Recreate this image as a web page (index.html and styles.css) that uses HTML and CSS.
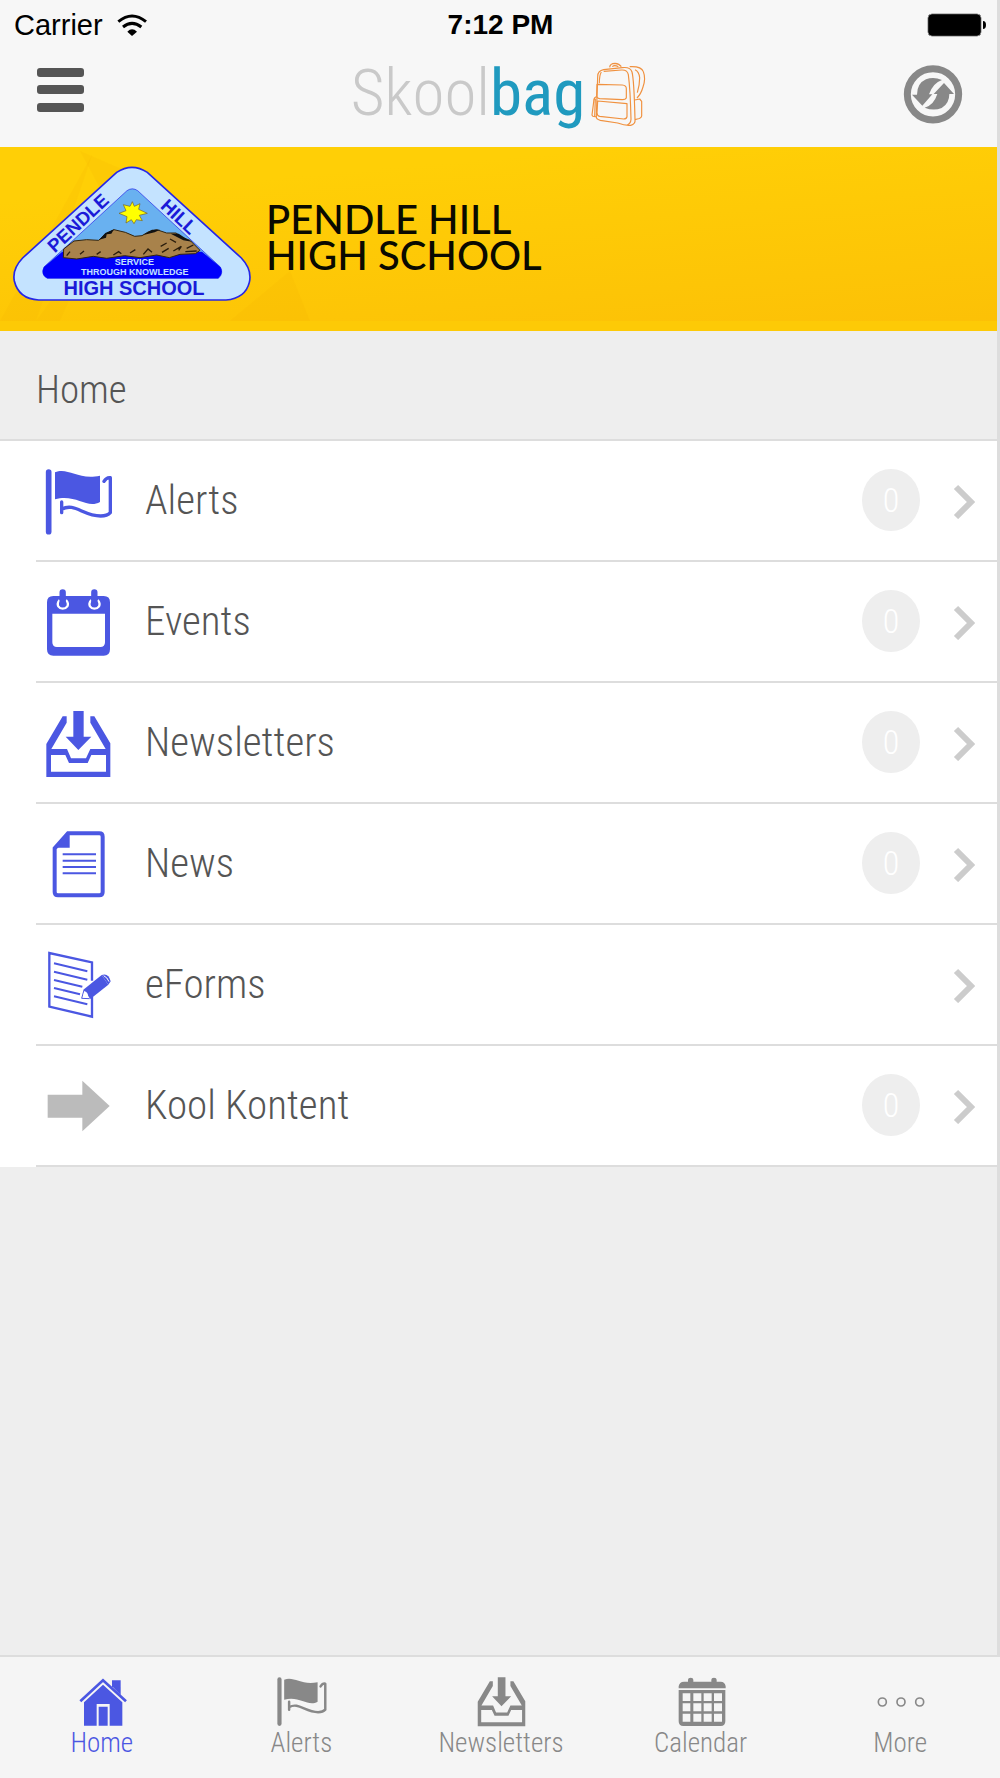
FILE: index.html
```html
<!DOCTYPE html>
<html lang="en">
<head>
<meta charset="utf-8">
<meta name="viewport" content="width=device-width, initial-scale=1">
<title>Pendle Hill High School</title>
<link rel="stylesheet" href="styles.css">
</head>
<body>
<svg class="sprite" aria-hidden="true">
  <symbol id="flag" viewBox="132 380 210 210">
    <path d="M146 398V577" fill="none" stroke="currentColor" stroke-width="17" stroke-linecap="round"/>
    <path d="M165 399C205 383 232 423 300 409V488C260 510 228 463 165 480Z" fill="currentColor"/>
    <path d="M185 488V520M185 510C222 488 250 530 302 530Q322 530 331 520V415Q320 413 312 426" fill="none" stroke="currentColor" stroke-width="10" stroke-linecap="round" stroke-linejoin="round"/>
  </symbol>
  <symbol id="events" viewBox="132 742 210 210">
    <path fill-rule="evenodd" fill="currentColor" d="M160 769H311Q330 769 330 788V929Q330 948 311 948H160Q141 948 141 929V788Q141 769 160 769ZM157 822V908Q157 922 171 922H301Q315 922 315 908V822Z"/>
    <path d="M179 781Q170 791 175 800Q180 807 188 807Q197 807 202 800Q207 791 198 781M274 781Q265 791 270 800Q275 807 283 807Q292 807 297 800Q302 791 293 781" fill="none" stroke="#fff" stroke-width="7"/>
    <path d="M188 758V792M283 758V792" fill="none" stroke="currentColor" stroke-width="19" stroke-linecap="round"/>
  </symbol>
  <symbol id="inbox" viewBox="132 84 210 210">
    <path fill="currentColor" d="M220 93H251V170H274L235 210L197 170H220Z"/>
    <path fill-rule="evenodd" fill="currentColor" d="M188 109H200V128L154 207H201L213 235H258L271 207H317L271 128V109H283L331 190V291H139V192ZM153 225V275H318V225H274L263 249H207L196 225Z"/>
  </symbol>
  <symbol id="news" viewBox="132 448 210 210">
    <path d="M204 461H298Q308 461 308 471V637Q308 647 298 647H174Q164 647 164 637V506Z" fill="none" stroke="currentColor" stroke-width="12"/>
    <path d="M209 459V504H161Z" fill="currentColor"/>
    <path d="M188 524H288M188 543H288M188 562H288M188 581H288" stroke="currentColor" stroke-width="6"/>
  </symbol>
  <symbol id="eforms" viewBox="132 92 210 210">
    <path d="M276 184V129L148 101V262L276 292V232" fill="none" stroke="currentColor" stroke-width="7"/>
    <path d="M162 132L262 156M162 157L262 181M162 182L247 202M162 206L240 225M162 231L262 255" stroke="currentColor" stroke-width="6"/>
    <path d="M250 211L305 167L325 196L271 239Z" fill="currentColor"/>
    <path d="M305 167Q326 160 332 186L325 196Z" fill="currentColor"/>
    <path d="M252 212L245 237L269 238" fill="none" stroke="currentColor" stroke-width="3"/>
    <path d="M253 216Q264 218 265 233L249 234Z" fill="#fff"/>
    <path d="M311 169Q322 174 327 187" fill="none" stroke="#fff" stroke-width="3"/>
  </symbol>
  <symbol id="arrow" viewBox="132 454 210 210">
    <path d="M143 525H247V483L329 559L247 635V594H143Z" fill="currentColor"/>
  </symbol>
  <symbol id="chevron" viewBox="0 0 22 36">
    <path d="M3 4L18 19L3 34" fill="none" stroke="currentColor" stroke-width="6"/>
  </symbol>
  <symbol id="house" viewBox="226 108 156 156">
    <path d="M236 187L304 124L373 187" fill="none" stroke="currentColor" stroke-width="8"/>
    <path d="M331 142V124H357V168Z" fill="currentColor"/>
    <path fill-rule="evenodd" fill="currentColor" d="M304 137L362 190V260H324V195H285V260H247V190ZM291 203H318V260H291Z"/>
  </symbol>
  <symbol id="calendar" viewBox="830 108 156 156">
    <path d="M838 148V142Q840 128 854 128H866V122Q866 116 874 116Q882 116 882 122V128H936V122Q936 116 944 116Q952 116 952 122V128H964Q977 128 979 142V148Z" fill="currentColor"/>
    <path fill-rule="evenodd" fill="currentColor" d="M838 153H978V247Q978 261 964 261H852Q838 261 838 247ZM850 163V186H873V163ZM882 163V186H906V163ZM913 163V186H937V163ZM944 163V186H968V163ZM850 193V217H873V193ZM882 193V217H906V193ZM913 193V217H937V193ZM944 193V217H968V193ZM850 224V248H873V224ZM882 224V248H906V224ZM913 224V248H937V224ZM944 224V248H968V224Z"/>
  </symbol>
  <symbol id="more" viewBox="405 108 156 156">
    <g fill="none" stroke="currentColor" stroke-width="5"><circle cx="427" cy="189" r="12"/><circle cx="483" cy="189" r="12"/><circle cx="539" cy="189" r="12"/></g>
  </symbol>
</svg>

<div class="screen">
  <header class="header">
    <div class="status">
      <span class="carrier">Carrier
        <svg width="30" height="22" viewBox="355 37 90 66" aria-hidden="true">
          <g fill="none" stroke="#000" stroke-width="9"><path d="M359 60Q400 26 442 60"/><path d="M373 76Q400 54 428 76"/></g>
          <path d="M386 90Q400 76 415 90L400 103Z"/>
        </svg>
      </span>
      <time class="time">7:12 PM</time>
      <svg class="battery" width="60" height="24" viewBox="0 0 60 24" aria-hidden="true">
        <rect x="1" y="1" width="53" height="22" rx="4" fill="#000" stroke="#888" stroke-width="1"/>
        <rect x="2" y="2" width="51" height="20" rx="3" fill="none" stroke="#000" stroke-width="1"/>
        <path d="M56 8Q59 8 59 12Q59 16 56 16Z"/>
      </svg>
    </div>
    <nav class="navbar">
      <button class="icon-button menu" type="button" aria-label="Menu">
        <svg width="48" height="46" viewBox="0 0 48 46"><g fill="#555"><rect y="1" width="47" height="9" rx="3"/><rect y="18" width="47" height="9" rx="3"/><rect y="36" width="47" height="9" rx="3"/></g></svg>
      </button>
      <div class="brand">
        <span class="brand-name">Skool<b>bag</b></span>
        <svg width="60" height="68" viewBox="780 180 180 204" fill="none" stroke="#f0913f" stroke-width="3.5" stroke-linejoin="round" aria-hidden="true">
          <path d="M802 350L806 230Q806 212 824 209L880 203Q904 200 909 216Q915 238 918 358Q920 372 905 376Q890 378 866 369L814 361Q801 358 802 350Z"/>
          <path d="M817 216Q811 225 811 250M824 214L878 210Q895 209 898 224Q904 270 906 358Q905 370 895 375"/>
          <path d="M804 253L880 255Q892 256 892 266V293Q891 299 880 299L812 296Q802 294 803 286ZM806 303L894 311V350Q893 357 884 357L812 349Q804 347 804 338Z"/>
          <path d="M842 202Q843 190 858 190Q871 191 877 200M850 200Q856 194 868 200"/>
          <path d="M902 200Q937 198 943 215Q951 236 942 261Q936 282 924 294M918 209Q930 214 932 233Q932 254 925 278"/>
          <path d="M917 300L932 297L938 304V348Q937 355 925 357L918 359M803 290Q794 292 794 306L789 345Q790 351 802 350M799 296L797 350"/>
        </svg>
      </div>
      <button class="icon-button refresh" type="button" aria-label="Refresh">
        <svg width="60" height="60" viewBox="128 193 180 180"><circle cx="218" cy="284" r="77" fill="none" stroke="#888" stroke-width="21"/>
          <g fill="#888"><path d="M155 285H170Q170 251 197 239Q220 230 245 241Q218 250 206 284H216L186 318Z"/><path d="M281 283H267Q267 312 244 325Q220 335 193 324Q220 317 231 283H220L251 250Z"/></g></svg>
      </button>
    </nav>
  </header>

  <section class="banner">
    <svg class="banner-rays" viewBox="0 0 320 184" width="320" height="184" aria-hidden="true">
      <g fill="#f0a800"><path d="M92 8L36 174H0Z" opacity=".13"/><path d="M80 4L140 30L36 174H60L110 60Z" opacity=".1"/><path d="M230 174L290 124L310 174Z" opacity=".1"/></g>
    </svg>
    <svg class="crest" width="240" height="137" viewBox="36 60 720 411" role="img" aria-label="Pendle Hill High School crest">
      <path d="M350 82Q396 52 442 82L724 339Q757 374 748 412Q736 460 678 465H116Q56 462 43 408Q36 372 68 339Z" fill="#c4e3ff" stroke="#2626e6" stroke-width="5"/>
      <path d="M381 137Q397 126 413 137L661 366Q672 385 655 400H142Q121 389 132 366Z" fill="#69b1f0" stroke="#2020e8" stroke-width="2"/>
      <path d="M187 320H606L661 366Q672 385 655 400H142Q121 389 132 366Z" fill="#0000fb"/>
      <path d="M190 338L191 312L222 288L260 284L296 286L315 268L342 254L376 262L404 274L426 272L446 260L470 254L500 264L528 264L548 278L570 286L600 316L586 326L540 328L508 338L470 330L420 338L374 332L320 340L280 334L230 342Z" fill="#a8824b" stroke="#33240d" stroke-width="3"/>
      <path d="M298 284L316 264L342 253L334 266L320 268L318 278ZM430 270L456 254L480 254L464 262ZM512 266L536 266L560 282L576 290L550 286Z" fill="#111"/>
      <path d="M200 332L210 320M240 328L252 318M290 328L302 320M340 330L356 320L364 326M390 324L406 314M430 328L444 312L456 322M482 304L500 294M486 322L506 310M520 318L544 304L536 316M560 310L580 300M556 320L590 318M510 282L528 292" fill="none" stroke="#2a1d0c" stroke-width="4"/>
      <path d="M397 170L403 184L420 176L416 193L442 205L418 211L427 227L409 224L402 236L394 224L378 234L381 215L357 205L378 197L370 179L390 184Z" fill="#ff0" stroke="#745f26" stroke-width="2"/>
      <g class="crest-text" text-anchor="middle">
        <text class="crest-side" transform="translate(247 248) rotate(-43)">PENDLE</text>
        <text class="crest-side" transform="translate(524 229) rotate(43)">HILL</text>
        <text class="crest-base" x="402" y="450">HIGH SCHOOL</text>
        <text class="crest-motto" x="403" y="360">SERVICE</text>
        <text class="crest-motto" x="404" y="390">THROUGH KNOWLEDGE</text>
      </g>
    </svg>
    <h1 class="school">Pendle Hill<br>High School</h1>
  </section>

  <main class="content">
    <h2 class="page-title">Home</h2>
    <ul class="list">
      <li><a class="row" href="#alerts"><svg class="row-icon"><use href="#flag"/></svg><span class="label">Alerts</span><span class="badge">0</span><svg class="chevron"><use href="#chevron"/></svg></a></li>
      <li><a class="row" href="#events"><svg class="row-icon"><use href="#events"/></svg><span class="label">Events</span><span class="badge">0</span><svg class="chevron"><use href="#chevron"/></svg></a></li>
      <li><a class="row" href="#newsletters"><svg class="row-icon"><use href="#inbox"/></svg><span class="label">Newsletters</span><span class="badge">0</span><svg class="chevron"><use href="#chevron"/></svg></a></li>
      <li><a class="row" href="#news"><svg class="row-icon"><use href="#news"/></svg><span class="label">News</span><span class="badge">0</span><svg class="chevron"><use href="#chevron"/></svg></a></li>
      <li><a class="row" href="#eforms"><svg class="row-icon"><use href="#eforms"/></svg><span class="label">eForms</span><svg class="chevron"><use href="#chevron"/></svg></a></li>
      <li><a class="row" href="#kontent"><svg class="row-icon muted"><use href="#arrow"/></svg><span class="label">Kool Kontent</span><span class="badge">0</span><svg class="chevron"><use href="#chevron"/></svg></a></li>
    </ul>
  </main>
</div>

<nav class="tabs" aria-label="Sections">
  <a class="tab active" href="#home" aria-current="page"><svg><use href="#house"/></svg>Home</a>
  <a class="tab" href="#alerts"><svg><use href="#flag"/></svg>Alerts</a>
  <a class="tab" href="#newsletters"><svg><use href="#inbox"/></svg>Newsletters</a>
  <a class="tab" href="#calendar"><svg><use href="#calendar"/></svg>Calendar</a>
  <a class="tab" href="#more"><svg><use href="#more"/></svg>More</a>
</nav>
</body>
</html>
```
FILE: styles.css
```css
* { box-sizing: border-box; }

body {
  display: flex;
  flex-direction: column;
  min-height: 100vh;
  margin: 0;
  background: #eee;
  color: #555;
  font-family: "Roboto Condensed", "Liberation Sans Narrow", Roboto, sans-serif;
  font-weight: 300;
}

a { color: inherit; text-decoration: none; }
svg { display: block; flex: none; }
.sprite { position: absolute; width: 0; height: 0; }

.screen {
  display: flex;
  flex: 1;
  flex-direction: column;
  border-right: 3px solid #ddd;
}

.header { height: 147px; background: #f7f7f7; }

.status {
  display: grid;
  grid-template-columns: 1fr auto 1fr;
  align-items: center;
  height: 50px;
  padding: 0 10px 0 14px;
  color: #000;
  font-family: "Liberation Sans", Arial, sans-serif;
  font-size: 29px;
  font-weight: 400;
}
.carrier { display: flex; align-items: center; gap: 14px; }
.time { font-size: 28px; font-weight: 700; }
.battery { justify-self: end; }

.navbar {
  display: grid;
  grid-template-columns: 1fr auto 1fr;
  align-items: center;
  height: 88px;
  padding: 0 34px 0 37px;
}
.icon-button { padding: 0; border: 0; background: none; }
.menu { justify-self: start; padding-bottom: 8px; }
.refresh { justify-self: end; }
.brand { display: flex; align-items: center; gap: 4px; }
.brand-name {
  padding-bottom: 2px;
  color: #c9c9c9;
  font-size: 65px;
  font-weight: 300;
  line-height: 78px;
}
.brand-name b { color: #209abf; font-weight: 400; }

.banner {
  position: relative;
  display: flex;
  align-items: center;
  gap: 14px;
  height: 184px;
  padding: 0 12px 12px;
  background:
    linear-gradient(#fdca06, #fdca06) bottom / 100% 10px no-repeat,
    linear-gradient(175deg, #ffcf06 20%, #fcc006);
}
.banner-rays { position: absolute; top: 0; left: 0; }
.crest { position: relative; }
.crest-text { fill: #1a1ad8; font-family: "Liberation Sans", Arial, sans-serif; font-weight: 700; }
.crest-side { font-size: 56px; }
.crest-base { font-size: 60px; }
.crest-motto { fill: #c4e3ff; font-size: 27px; }
.school {
  margin: 0;
  padding-top: 8px;
  color: #0a0a00;
  font-family: Lato, sans-serif;
  font-size: 40px;
  font-weight: 500;
  line-height: 36px;
  text-transform: uppercase;
}

.page-title {
  height: 110px;
  margin: 0;
  padding: 0 36px;
  border-bottom: 2px solid #ddd;
  font-size: 39px;
  font-weight: 300;
  line-height: 118px;
}

.list { margin: 0; padding: 0 0 0 36px; background: #fff; list-style: none; }
.row {
  display: flex;
  align-items: center;
  height: 121px;
  padding: 0 22px 0 8px;
  border-bottom: 2px solid #ddd;
}
.row-icon { width: 70px; height: 70px; margin-right: 31px; color: #4b57e2; }
.row-icon.muted { color: #bbb; }
.label { flex: 1; padding-bottom: 2px; font-size: 41px; line-height: 48px; }
.badge {
  width: 58px;
  height: 62px;
  margin-bottom: 2px;
  border-radius: 50%;
  background: #eee;
  color: #fff;
  font-size: 34px;
  line-height: 62px;
  text-align: center;
}
.chevron { width: 22px; height: 36px; margin-left: 33px; color: #ccc; }

.tabs {
  display: grid;
  grid-template-columns: repeat(5, 1fr);
  height: 123px;
  padding: 18px 0 0 2px;
  border-top: 2px solid #ddd;
  background: #f5f5f5;
}
.tab {
  display: flex;
  flex-direction: column;
  align-items: center;
  color: #888;
  font-size: 27px;
  line-height: 32px;
}
.tab svg { width: 52px; height: 52px; margin-left: 2px; }
.tab.active { color: #4b57e2; }
```
